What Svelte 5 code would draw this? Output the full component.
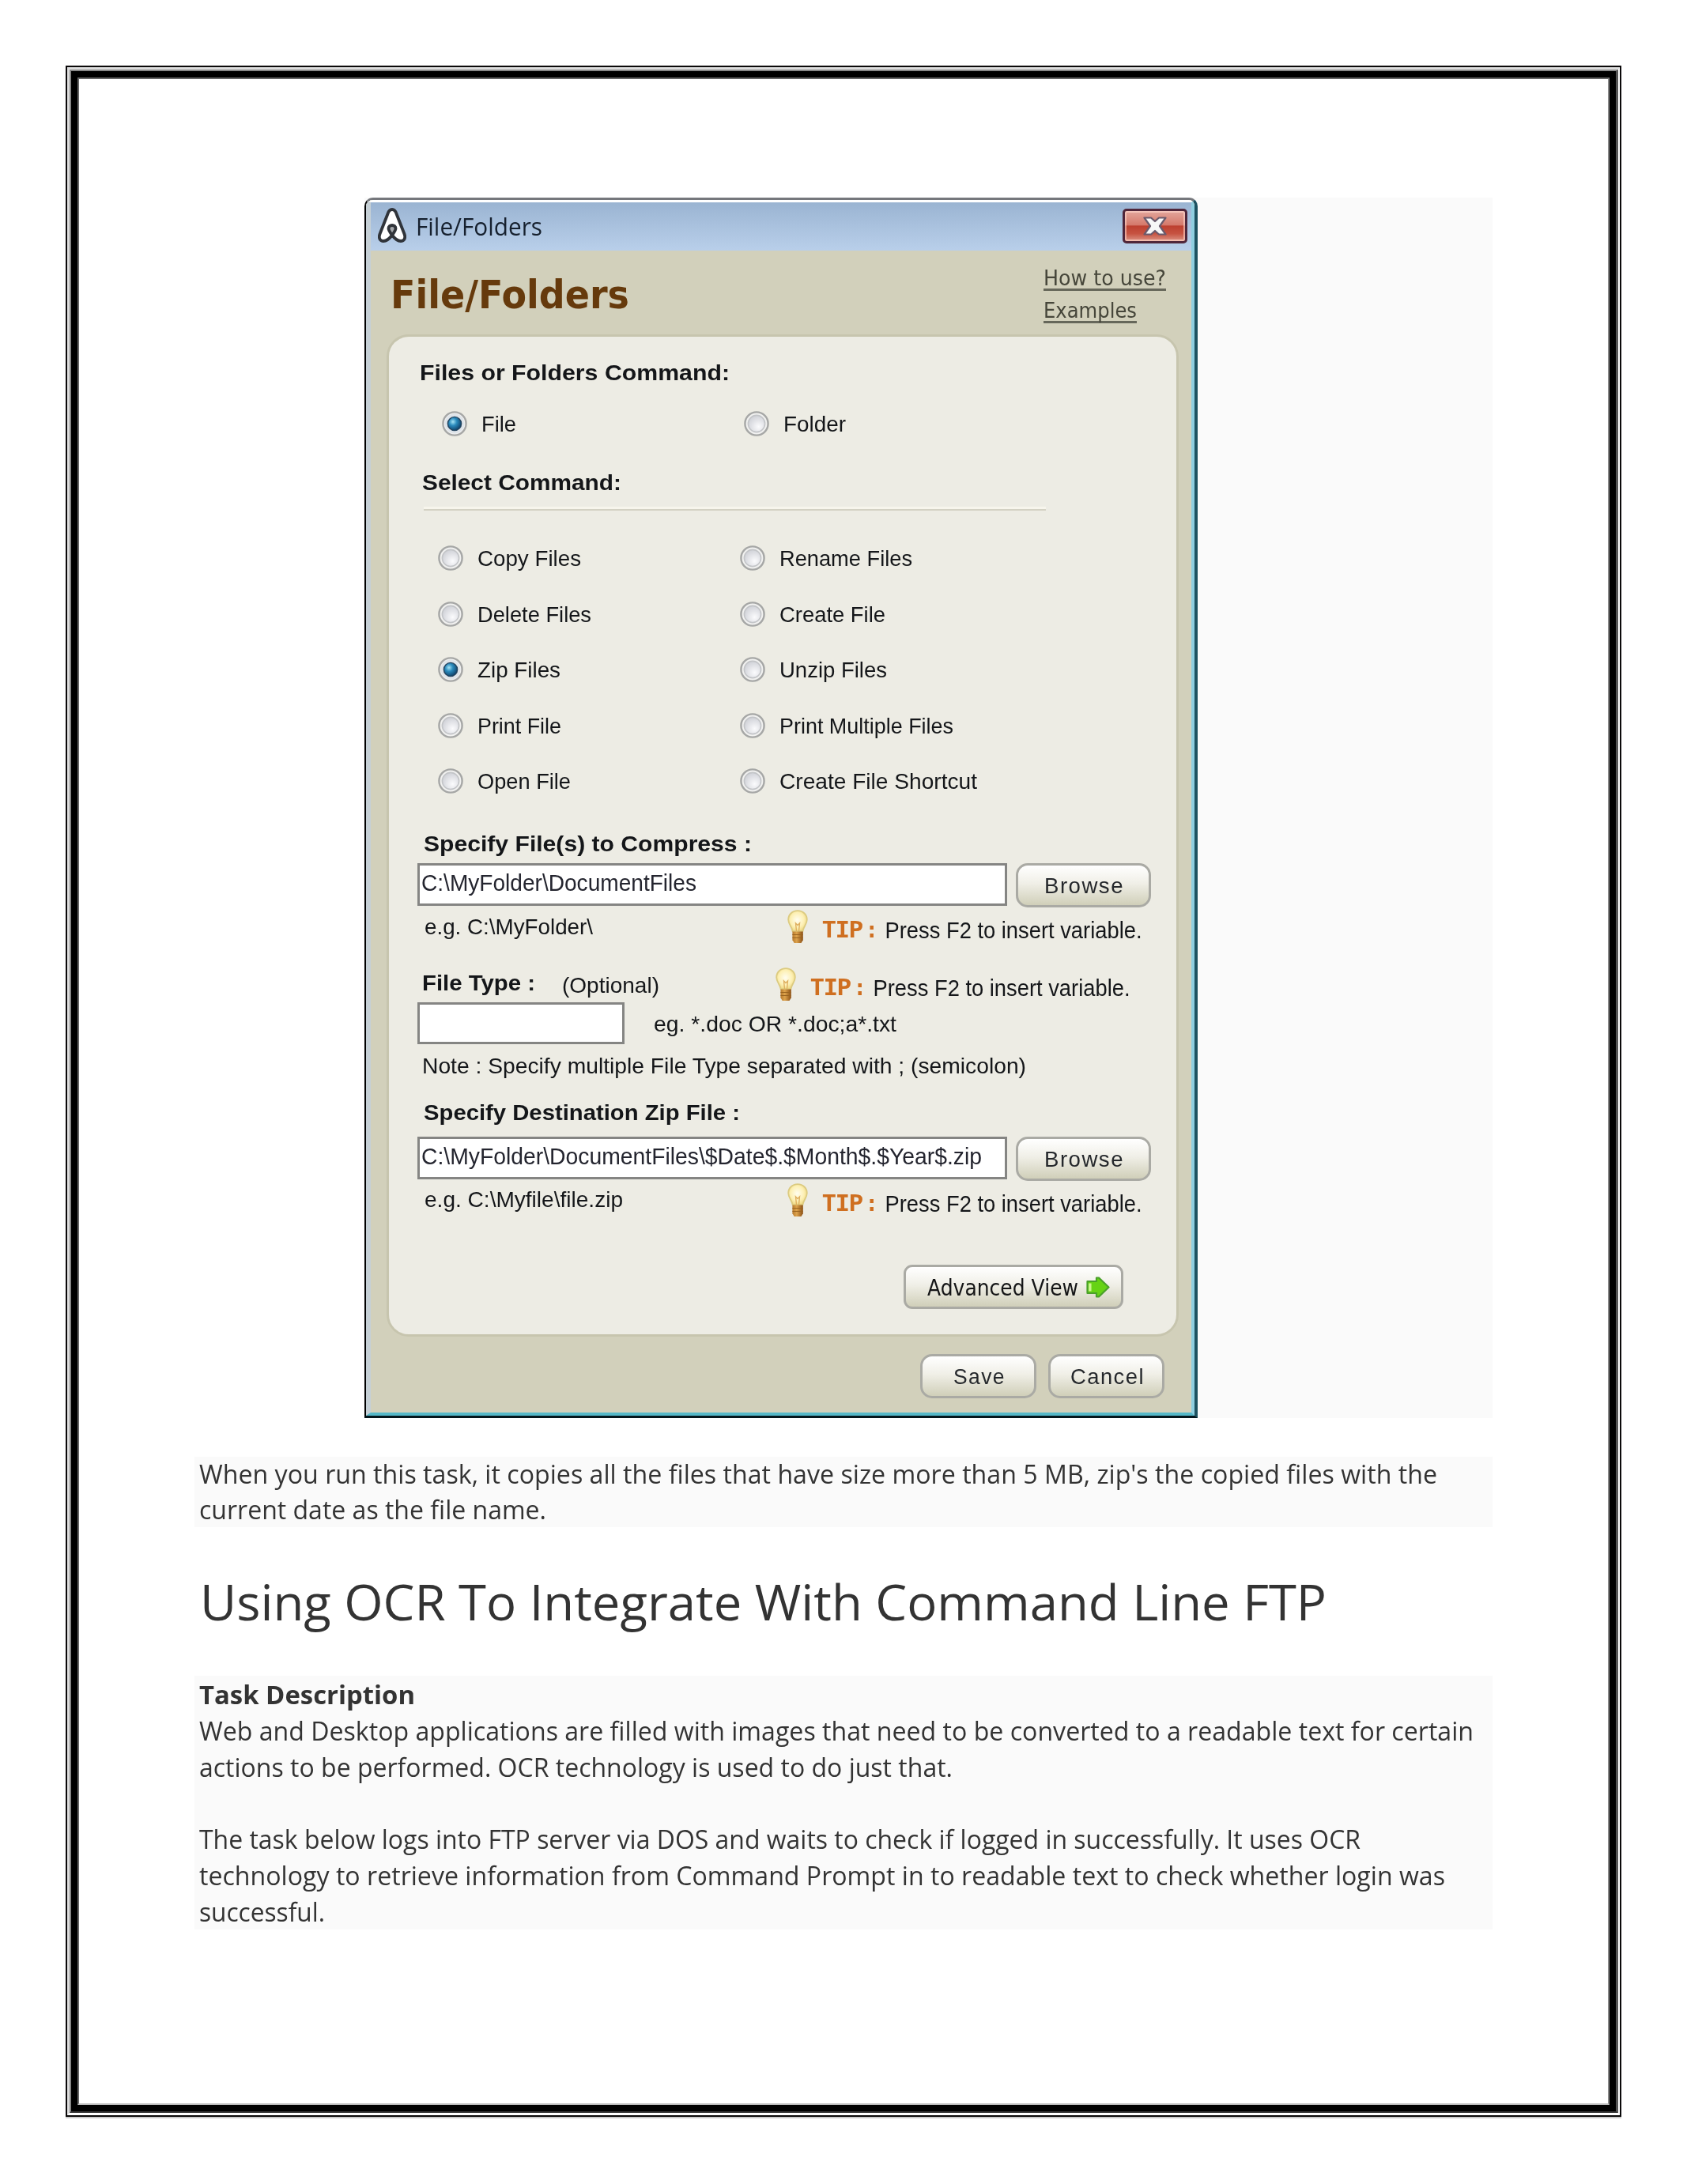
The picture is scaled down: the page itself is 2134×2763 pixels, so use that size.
<script>
  const objectTypes = [
    { label: 'File', width: 44, on: true },
    { label: 'Folder', width: 79, on: false },
  ];

  const commands = [
    { label: 'Copy Files', width: 131, on: false },
    { label: 'Rename Files', width: 168, on: false },
    { label: 'Delete Files', width: 144, on: false },
    { label: 'Create File', width: 134, on: false },
    { label: 'Zip Files', width: 105, on: true },
    { label: 'Unzip Files', width: 136, on: false },
    { label: 'Print File', width: 106, on: false },
    { label: 'Print Multiple Files', width: 220, on: false },
    { label: 'Open File', width: 118, on: false },
    { label: 'Create File Shortcut', width: 250, on: false },
  ];

  // Scales a single line of text horizontally so it spans the given width.
  function fit(node, width) {
    const natural = node.getBoundingClientRect().width;
    if (natural > 0) node.style.transform = `scaleX(${width / natural})`;
  }
</script>

{#snippet line(text, width, kind = '')}
  <span class="line {kind}" style:width="{width}px"><span class="glyphs" use:fit={width}>{text}</span></span>
{/snippet}

{#snippet radio(item)}
  <div class="option">
    <svg class="radio" viewBox="0 0 32 32" aria-hidden="true">
      <circle cx="16" cy="16" r="14.6" fill="#f1f1f0" stroke="#a6a7a6" stroke-width="2.4" />
      {#if item.on}
        <circle cx="16" cy="16" r="12.4" fill="#dfe4e9" />
        <circle cx="16" cy="16" r="8.6" fill="url(#dot)" stroke="#23445f" stroke-width="1.4" />
      {:else}
        <circle cx="16" cy="16" r="10.6" fill="url(#well)" stroke="#c3c5c8" stroke-width="1.6" />
      {/if}
    </svg>
    {@render line(item.label, item.width)}
  </div>
{/snippet}

{#snippet tip()}
  <div class="tip">
    <svg class="bulb" viewBox="0 0 26 43" aria-hidden="true">
      <path d="M13 1.2C6 1.2 1.2 6.2 1.2 12.6c0 5.6 4.6 8.8 5.4 14.6h12.8c.8-5.800 5.400-9 5.400-14.600C24.800 6.200 20 1.200 13 1.200Z" fill="url(#glow)" stroke="#dccb80" stroke-width="1.8" />
      <path d="M11.500 27 10.500 17l2.500 2.500 2.500-2.500-1 10" fill="none" stroke="#dfb060" stroke-width="1.400" />
      <path d="M6.400 27.500h13.400v10.800l-2.300 3.700H8.700l-2.300-3.700Z" fill="url(#cap)" />
      <path d="M6.400 31.500h13.400M6.400 35.500h13.400" stroke="#9a6420" stroke-width="1" />
    </svg>
    {@render line('TIP', 51, 'orange')}
    {@render line(':', 15, 'orange')}
    {@render line('Press F2 to insert variable.', 325, 'press')}
  </div>
{/snippet}

<svg class="defs" aria-hidden="true">
  <defs>
    <radialGradient id="well" cx=".62" cy=".68" r=".7">
      <stop offset="0" stop-color="#fbfbfd" />
      <stop offset="1" stop-color="#cfd1d7" />
    </radialGradient>
    <radialGradient id="dot" cx=".38" cy=".36" r=".7">
      <stop offset="0" stop-color="#a5e3f5" />
      <stop offset=".4" stop-color="#2b8bbd" />
      <stop offset="1" stop-color="#0c3a61" />
    </radialGradient>
    <radialGradient id="glow" cx=".48" cy=".45" r=".6">
      <stop offset="0" stop-color="#fffdf0" />
      <stop offset=".6" stop-color="#fdf0b4" />
      <stop offset="1" stop-color="#ecd47a" />
    </radialGradient>
    <linearGradient id="cap">
      <stop offset="0" stop-color="#b87a2c" />
      <stop offset=".4" stop-color="#dca24c" />
      <stop offset="1" stop-color="#8b4f14" />
    </linearGradient>
  </defs>
</svg>

<div class="edge e1"><div class="edge e2"><div class="edge e3"><div class="edge e4"><div class="edge e5">
  <article>
    <figure>
      <section class="dialog">
        <div class="frame">
          <header class="titlebar">
            <svg class="logo" viewBox="0 0 36 44" aria-hidden="true">
              <path d="M18 2c-3 0-4.500 2.500-5.500 5.500L2.500 33c-2 5.500.5 9 4.500 9 5 0 8-3.500 11-7.500 3 4 6 7.500 11 7.500 4 0 6.500-3.500 4.500-9L23.500 7.500C22.500 4.500 21 2 18 2Z" fill="#fff" stroke="#30343a" stroke-width="3.800" />
              <path d="M18 34.500c-3-4-4.500-6.500-4.500-8.500 0-2.500 2-4 4.500-4s4.500 1.500 4.500 4c0 2-1.500 4.500-4.500 8.500Z" fill="#a5a8ac" stroke="#30343a" stroke-width="3.800" />
            </svg>
            {@render line('File/Folders', 160, 'caption')}
            <button class="close" aria-label="Close">
              <svg viewBox="0 0 30 24" aria-hidden="true">
                <path d="M1.500 1.500h8.500l5 4.500 5-4.500h8.500L21 12l7.500 10.500H20L15 18l-5 4.500H1.500L9 12Z" fill="#f7f7f7" stroke="#6a5a6c" stroke-width="2.200" stroke-linejoin="round" />
              </svg>
            </button>
          </header>

          <div class="head">
            {@render line('File/Folders', 302, 'title')}
            <nav>
              {@render line('How to use?', 155, 'link')}
              {@render line('Examples', 118, 'link')}
            </nav>
          </div>

          <div class="panel">
            <div class="row first">{@render line('Files or Folders Command:', 392, 'bold')}</div>
            <div class="options types">
              {#each objectTypes as item}{@render radio(item)}{/each}
            </div>
            <div class="row select">{@render line('Select Command:', 252, 'bold')}</div>
            <hr />
            <div class="options">
              {#each commands as item}{@render radio(item)}{/each}
            </div>

            <div class="row source">{@render line('Specify File(s) to Compress :', 415, 'bold')}</div>
            <div class="entry">
              <div class="field">{@render line('C:\\MyFolder\\DocumentFiles', 348, 'value')}</div>
              <button class="btn browse">{@render line('Browse', 101, 'spaced')}</button>
            </div>
            <div class="hint">
              {@render line('e.g. C:\\MyFolder\\', 213, 'example')}
              {@render tip()}
            </div>

            <div class="hint kind">
              {@render line('File Type :', 143, 'bold type')}
              {@render line('(Optional)', 123, 'optional')}
              {@render tip()}
            </div>
            <div class="entry pattern">
              <div class="field short"></div>
              {@render line('eg. *.doc OR *.doc;a*.txt', 307)}
            </div>
            <div class="row note">{@render line('Note : Specify multiple File Type separated with ; (semicolon)', 764)}</div>

            <div class="row target">{@render line('Specify Destination Zip File :', 400, 'bold')}</div>
            <div class="entry dest">
              <div class="field">{@render line('C:\\MyFolder\\DocumentFiles\\$Date$.$Month$.$Year$.zip', 709, 'value')}</div>
              <button class="btn browse">{@render line('Browse', 101, 'spaced')}</button>
            </div>
            <div class="hint last">
              {@render line('e.g. C:\\Myfile\\file.zip', 251, 'example')}
              {@render tip()}
            </div>

            <button class="btn advanced">
              {@render line('Advanced View', 191, 'adv')}
              <svg class="arrow" viewBox="0 0 30 27" aria-hidden="true">
                <path d="M1.500 6h11.500V1.500h3L28.500 13.500 16 25.500h-3V21H1.500Z" fill="#66d314" stroke="#4aa02a" stroke-width="2.200" stroke-linejoin="round" />
                <path d="M4.800 8.500v10" stroke="#c9f78d" stroke-width="3.500" />
              </svg>
            </button>
          </div>

          <footer>
            <button class="btn small">{@render line('Save', 66, 'spaced')}</button>
            <button class="btn small">{@render line('Cancel', 94, 'spaced')}</button>
          </footer>
        </div>
      </section>
    </figure>

    <div class="shade run">
      {@render line('When you run this task, it copies all the files that have size more than 5 MB, zip\'s the copied files with the', 1566)}
      {@render line('current date as the file name.', 439)}
    </div>

    <h1>{@render line('Using OCR To Integrate With Command Line FTP', 1425)}</h1>

    <div class="shade task">
      {@render line('Task Description', 273, 'strong')}
      {@render line('Web and Desktop applications are filled with images that need to be converted to a readable text for certain', 1612)}
      {@render line('actions to be performed. OCR technology is used to do just that.', 953)}
      <div class="blank"></div>
      {@render line('The task below logs into FTP server via DOS and waits to check if logged in successfully. It uses OCR', 1469)}
      {@render line('technology to retrieve information from Command Prompt in to readable text to check whether login was', 1576)}
      {@render line('successful.', 159)}
    </div>
  </article>
</div></div></div></div></div>

<style>
  :global(body) { margin: 0; background: #fff; }
  :global(#app) { box-sizing: border-box; padding: 83px; width: 2134px; height: 2763px; overflow: hidden; }
  .defs { position: absolute; width: 0; height: 0; }

  .edge { box-sizing: border-box; border-style: solid; height: 100%; }
  .e1 { width: 1968px; height: 2595px; border-width: 2px; border-color: #0a0809; box-shadow: 0 2px 0 #ccc; }
  .e2 { border-width: 3px 2px 3px 3px; border-color: #ddd #fff #fff #ddd; }
  .e3 { border-width: 2px 3px 2px 2px; border-color: #888 #555 #333 #888; }
  .e4 { border-width: 8px; border-color: #000; }
  .e5 { border-width: 2px; border-color: #666 #888 #bbb #666; }

  article {
    display: flex;
    flex-direction: column;
    width: 1642px;
    padding: 150px 0 0 146px;
    font-family: 'Open Sans', 'Noto Sans', sans-serif;
    color: #333;
  }

  .line { display: block; flex: none; white-space: nowrap; }
  .glyphs { display: inline-block; transform-origin: 0 50%; }

  figure { display: flex; height: 1544px; margin: 0 0 0 215px; background: #fafafa; }
  .dialog {
    box-sizing: border-box;
    display: flex;
    width: 1054px;
    border-style: solid;
    border-width: 3px 4px 3px 2px;
    border-color: #75777c #1d5260 #04161c #000;
    border-radius: 11px 11px 0 0;
    font-family: 'Liberation Sans', Arial, sans-serif;
    font-size: 28px;
    line-height: 32px;
    color: #141619;
    overflow: hidden;
  }
  .frame {
    box-sizing: border-box;
    display: flex;
    flex-direction: column;
    width: 100%;
    border-style: solid;
    border-width: 3px 4px 4px 6px;
    border-color: #fff #8fcfe0 #55b8c8 #c6d0d6;
    background: #d2d0bb;
  }
  .dialog .line, .dialog svg { filter: blur(.55px); }
  .dialog .line { transform: translate(1px, 1px); }
  .dialog .tip .line { transform: translate(1.500px, 0); }
  .dialog .value, .dialog .optional { transform: translate(0, -.5px); }

  .titlebar {
    box-sizing: border-box;
    display: flex;
    height: 61px;
    padding: 7px 5px 0 9px;
    background: linear-gradient(#9ab4d2, #b9cfea);
  }
  .logo { width: 36px; height: 44px; }
  .caption { margin-left: 11px; font-family: 'Open Sans', sans-serif; font-size: 31px; line-height: 45px; color: #16202e; }
  .close {
    box-sizing: border-box;
    display: flex;
    justify-content: center;
    align-items: center;
    width: 82px;
    height: 44px;
    margin: 1px 0 0 auto;
    padding: 0;
    border: 3px solid #50263a;
    border-radius: 5px;
    background: linear-gradient(#e3a69c, #d57a6c 46%, #bd4030 50%, #c65341 75%, #dc9384);
    box-shadow: inset 0 0 0 2px rgba(255, 215, 205, .6);
  }
  .close svg { width: 30px; height: 24px; }

  .head { box-sizing: border-box; display: flex; justify-content: space-between; height: 106px; padding: 0 33px 0 24px; }
  .title { font-family: 'DejaVu Sans', Verdana, sans-serif; font-size: 50px; font-weight: 700; line-height: 111px; color: #663a0c; }
  nav { padding-top: 14px; }
  .link { font-family: 'DejaVu Sans', Tahoma, sans-serif; font-size: 26px; line-height: 41px; color: #46463a; }
  .link .glyphs { text-decoration: underline 3px #66675a; text-underline-offset: 4px; text-decoration-skip-ink: none; }

  .panel {
    box-sizing: border-box;
    display: flex;
    flex-direction: column;
    width: 1002px;
    height: 1268px;
    margin-left: 20px;
    padding-left: 36px;
    border: 3px solid #c7c5ae;
    border-radius: 28px;
    background: #edece4;
  }
  .bold { font-weight: 700; }
  .row { height: 32px; padding-left: 5px; }
  .first { margin-top: 29px; padding-left: 2px; }
  .options { display: grid; grid-template-columns: 382px 382px; row-gap: 38.600px; margin: 44px 0 0 26px; }
  .types { margin: 33px 0 0 31px; }
  .option { display: flex; gap: 17px; height: 32px; }
  .radio { width: 32px; height: 32px; }
  .select { margin-top: 42px; }
  hr { width: 787px; height: 3px; margin: 15px 0 0 8px; border: 0; border-bottom: 2px solid #d3d1c3; background: #f7f5ec; }
  .source { margin-top: 47px; padding-left: 7px; }

  .entry { display: flex; gap: 11px; height: 56px; margin-top: 9px; }
  .field { box-sizing: border-box; width: 746px; height: 54px; padding-left: 2px; border: 3px solid #858583; background: #fff; }
  .value { font-size: 30px; line-height: 44px; color: #24252f; }
  .btn {
    box-sizing: border-box;
    display: flex;
    justify-content: center;
    align-items: center;
    height: 56px;
    padding: 0;
    border: 3px solid #aaaaa4;
    border-radius: 15px;
    background: linear-gradient(#fff, #f0efe7 45%, #d0cfb9);
    font: inherit;
    color: #25282c;
  }
  .browse { width: 171px; }
  .btn .spaced { line-height: 36px; }
  .spaced .glyphs { letter-spacing: 1.500px; }

  .hint { display: flex; height: 44px; margin-top: 3px; }
  .example { margin-left: 8px; line-height: 41px; }
  .tip { display: flex; margin: 0 45px 0 auto; }
  .bulb { width: 26px; height: 43px; margin-right: 16px; }
  .orange { font-family: 'DejaVu Sans Mono', monospace; font-size: 28px; font-weight: 700; line-height: 52px; color: #cf6f20; }
  .orange .glyphs { letter-spacing: -1.500px; }
  .orange + .orange { margin: 0 10px 0 4px; }
  .press { font-size: 30px; line-height: 52px; }
  .kind { margin-top: 29px; }
  .kind .tip { margin-right: 60px; }
  .type { margin-left: 5px; line-height: 37px; }
  .optional { margin-left: 35px; line-height: 45px; }
  .pattern { align-items: center; gap: 36px; height: 53px; margin-top: 0; }
  .short { width: 262px; height: 53px; }
  .note { margin-top: 11px; }
  .target { margin-top: 27px; padding-left: 7px; }
  .dest { margin-top: 15px; }
  .last .example { line-height: 40px; }

  .advanced { justify-content: flex-start; width: 278px; margin: 59px 0 0 615px; padding-left: 26px; border-radius: 11px; }
  .adv { font-family: 'DejaVu Sans', sans-serif; font-size: 29px; line-height: 38px; color: #141516; }
  .arrow { width: 30px; height: 27px; margin-left: 11px; }

  footer { display: flex; justify-content: flex-end; gap: 15px; padding: 22px 34px 0 0; }
  .small { width: 147px; }

  .shade { box-sizing: border-box; padding-left: 6px; background: #fafafa; font-size: 32px; }
  .run { height: 89px; margin-top: 49px; line-height: 44.500px; }
  h1 { margin: 0; padding: 47px 0 0 7px; height: 141px; font-size: 63px; font-weight: 400; line-height: 93px; }
  .task { height: 321px; line-height: 45.700px; }
  .strong { font-weight: 700; line-height: 47px; }
  .blank { height: 45.700px; }
</style>
